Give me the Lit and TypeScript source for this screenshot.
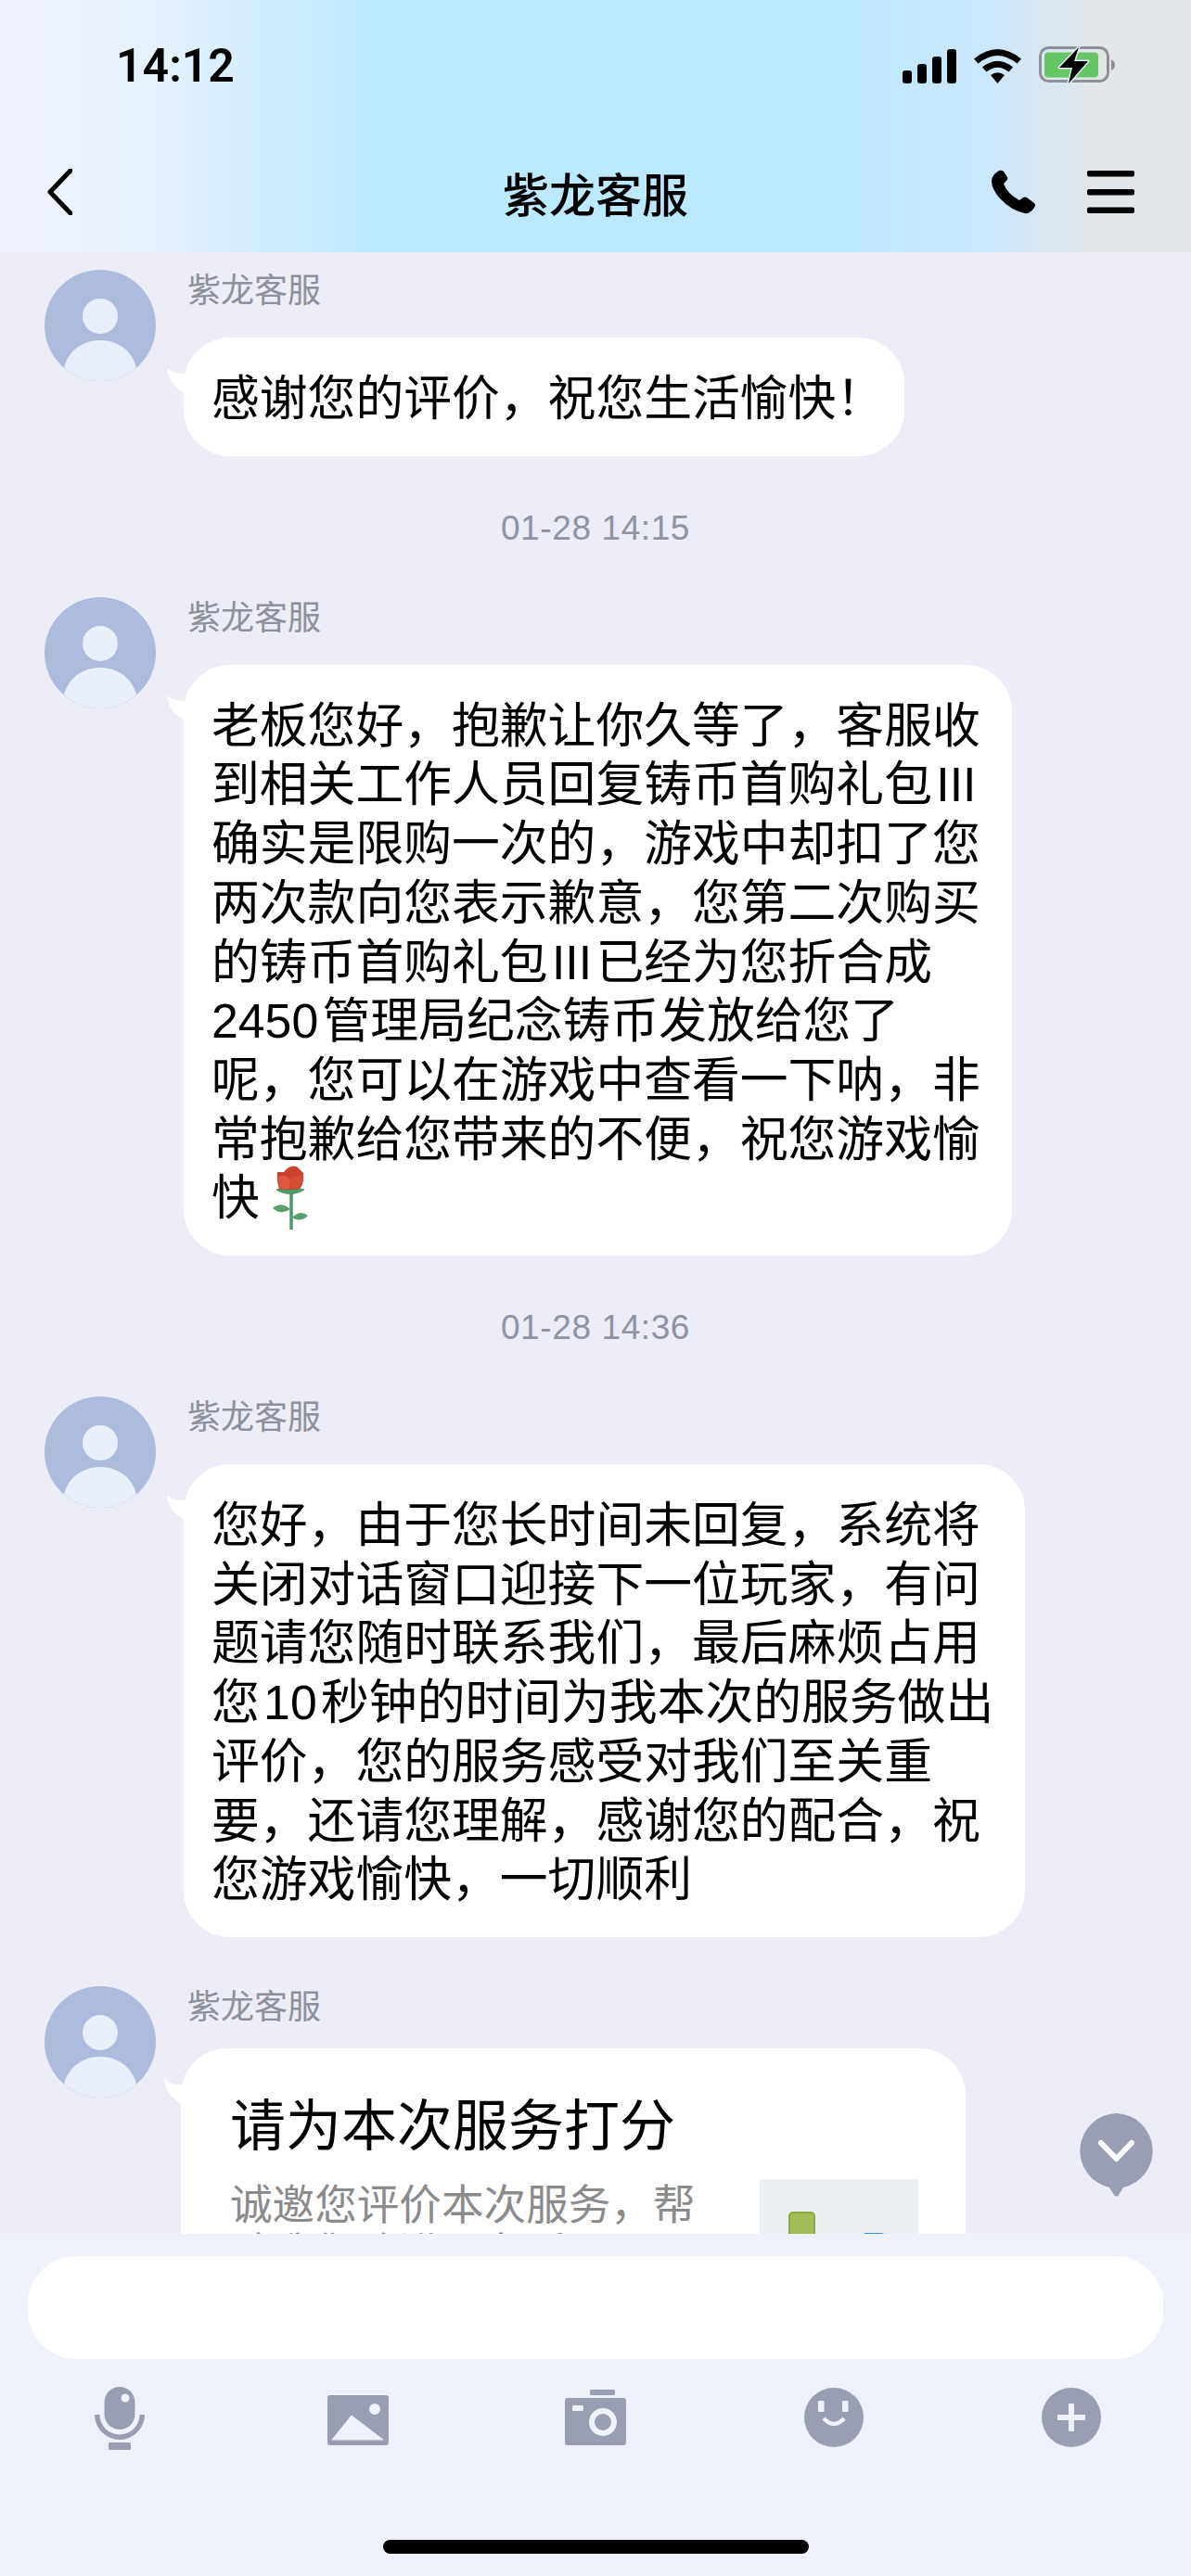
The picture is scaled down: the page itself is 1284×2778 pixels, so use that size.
import { LitElement, html, css, svg } from 'lit';
import { customElement } from 'lit/decorators.js';

const rose = html`<svg class="rose" viewBox="0 0 38 69">
  <path d="M20 28 L20 68" stroke="#4f9768" stroke-width="3.5" stroke-linecap="round" fill="none" />
  <path d="M5 26 Q20 34 33 26 Q20 23 5 26Z" fill="#4f9768" stroke="#4f9768" stroke-width="2" stroke-linejoin="round" />
  <path d="M19 47 Q9 38 0 46 Q9 54 19 47Z" fill="#5b9f70" />
  <path d="M21 56 Q30 47 38 54 Q30 62 21 56Z" fill="#5b9f70" />
  <path d="M5 7 L12 7 Q18 -1 26 1 L33 8 Q34 20 29 25 Q18 27 7 25 Q4 16 5 7Z" fill="#c8432f" />
  <path d="M6 12 Q15 9 19 16 L18 25 Q12 26 8 24Z" fill="#e2583f" />
  <path d="M19 16 Q24 9 32 11 Q32 20 28 24 L20 25Z" fill="#d64e37" />
</svg>`;

const messages = [
  { time: '', lines: [html`感谢您的评价，祝您生活愉快<span class="bang">！</span>`] },
  {
    time: '01-28 14:15',
    lines: [
      '老板您好，抱歉让你久等了，客服收',
      '到相关工作人员回复铸币首购礼包\u200aIII',
      '确实是限购一次的，游戏中却扣了您',
      '两次款向您表示歉意，您第二次购买',
      '的铸币首购礼包\u200aIII\u200a已经为您折合成',
      '2450\u200a管理局纪念铸币发放给您了',
      '呢，您可以在游戏中查看一下呐，非',
      '常抱歉给您带来的不便，祝您游戏愉',
      html`快${rose}`,
    ],
  },
  {
    time: '01-28 14:36',
    lines: [
      '您好，由于您长时间未回复，系统将',
      '关闭对话窗口迎接下一位玩家，有问',
      '题请您随时联系我们，最后麻烦占用',
      '您\u200a10\u200a秒钟的时间为我本次的服务做出',
      '评价，您的服务感受对我们至关重',
      '要，还请您理解，感谢您的配合，祝',
      '您游戏愉快，一切顺利',
    ],
  },
];

@customElement('app-root')
export class AppRoot extends LitElement {
  static styles = css`
    :host {
      display: flex;
      flex-direction: column;
      height: 2778px;
      overflow: hidden;
      position: relative;
      background: #ecedf6;
      font-family: 'Liberation Sans', 'Noto Sans CJK SC', sans-serif;
      color: #000;
    }
    .header {
      height: 272px;
      flex: none;
      box-sizing: border-box;
      background: linear-gradient(90deg, #f1f3ff 0%, #e6f1ff 14%, #bde9ff 30%, #b9e9ff 70%, #cce7fb 83%, #e0e6ea 91%, #e4e7ea 100%);
    }
    .status {
      height: 40px;
      padding: 51px 82px 0 125px;
      display: flex;
      align-items: center;
      justify-content: space-between;
    }
    .clock {
      font: 600 50px/40px Roboto, sans-serif;
    }
    .status-icons {
      display: flex;
      align-items: center;
      gap: 19px;
    }
    .nav {
      margin-top: 88px;
      padding: 0 61px 0 51px;
      height: 56px;
      display: flex;
      align-items: center;
      justify-content: space-between;
      position: relative;
    }
    .title {
      position: absolute;
      left: 0;
      right: 0;
      text-align: center;
      font-size: 50px;
      font-weight: 500;
      line-height: 56px;
      font-family: 'Noto Sans CJK SC', sans-serif;
    }
    .nav-actions {
      display: flex;
      align-items: center;
      gap: 55px;
    }
    svg {
      display: block;
      flex: none;
    }
    .chat {
      flex: 1;
      min-height: 0;
      overflow: hidden;
      padding: 19px 0 0 48px;
    }
    .stamp {
      margin: 56px 0 52px -48px;
      text-align: center;
      font-size: 37px;
      letter-spacing: 0.6px;
      line-height: 44px;
      color: #8f93a3;
    }
    .msg {
      display: flex;
      gap: 30px;
      margin-bottom: 53px;
    }
    .msg.last {
      margin-bottom: 0;
    }
    .avatar {
      width: 120px;
      height: 120px;
    }
    .body {
      display: flex;
      flex-direction: column;
      align-items: flex-start;
    }
    .name {
      margin: 1px 0 0 4px;
      font-size: 36px;
      line-height: 44px;
      color: #8e909c;
    }
    .bubble {
      position: relative;
      margin-top: 28px;
      padding: 35px 34px 29px 30px;
      background: #fff;
      border-radius: 50px;
      font-size: 51.8px;
      line-height: 63.7px;
      white-space: nowrap;
    }
    .bang {
      margin-right: -12px;
    }
    .tail {
      position: absolute;
      left: -18px;
      top: 33px;
    }
    .rose {
      display: inline-block;
      width: 38px;
      height: 69px;
      margin: -10px 0 -16px 14px;
    }
    .card {
      width: 846px;
      height: 400px;
      margin: 22px 0 0 -3px;
      padding: 45px 51px 0 53px;
      box-sizing: border-box;
      white-space: normal;
    }
    .card-title {
      font-size: 60px;
      line-height: 80px;
    }
    .card-row {
      display: flex;
      justify-content: space-between;
      margin-top: 16px;
    }
    .card-text {
      width: 510px;
      padding-top: 3px;
      font-size: 45.6px;
      line-height: 52px;
      color: #8b8b8b;
    }
    .thumb {
      width: 171px;
      height: 200px;
      background: #ebf0f4;
      position: relative;
    }
    .thumb i {
      position: absolute;
      display: block;
      box-sizing: border-box;
      border-radius: 5px 5px 0 0;
    }
    .thumb .green {
      left: 31px;
      top: 35px;
      width: 29px;
      height: 80px;
      background: #a5bb57;
      border: 2px solid #8caa42;
    }
    .thumb .blue {
      left: 110px;
      top: 58px;
      width: 26px;
      height: 60px;
      background: #3a8fd8;
    }
    .scroll-down {
      position: absolute;
      left: 1163px;
      top: 2279px;
    }
    .footer {
      flex: none;
      height: 369px;
      box-sizing: border-box;
      padding: 24px 30px 0;
      position: relative;
      background: #f0f2fb;
    }
    .input {
      height: 111px;
      background: #fff;
      border-radius: 52px;
    }
    .tools {
      margin: 30px -30px 0;
      display: grid;
      grid-template-columns: repeat(5, 256.5px);
      justify-content: center;
    }
    .tool {
      display: flex;
      justify-content: center;
    }
    .tool.image {
      padding-top: 9px;
    }
    .tool.camera {
      padding-top: 3px;
    }
    .tool.round {
      padding-top: 1px;
    }
    .home-bar {
      position: absolute;
      left: 413px;
      top: 330px;
      width: 459px;
      height: 15px;
      border-radius: 8px;
      background: #000;
    }
  `;

  avatar() {
    return html`<svg class="avatar" viewBox="0 0 120 120">
      <circle cx="60" cy="60" r="60" fill="#adbcdc" />
      <circle cx="60" cy="50" r="19" fill="#e9f0fb" />
      <path d="M21 105.500 C30 66 90 66 99 105.500 A60 60 0 0 1 21 105.500Z" fill="#e9f0fb" />
    </svg>`;
  }

  tail() {
    return svg`<svg class="tail" width="22" height="32" viewBox="0 0 22 32">
      <path d="M0 0 Q8 7 20 6 L22 28 Q2 20 0 0Z" fill="#fff" />
    </svg>`;
  }

  renderMessage(m: (typeof messages)[number]) {
    return html`
      ${m.time ? html`<div class="stamp">${m.time}</div>` : ''}
      <div class="msg">
        ${this.avatar()}
        <div class="body">
          <div class="name">紫龙客服</div>
          <div class="bubble">
            ${this.tail()}
            ${m.lines.map((l, i) => html`${i ? html`<br />` : ''}${l}`)}
          </div>
        </div>
      </div>
    `;
  }

  render() {
    return html`
      <div class="header">
        <div class="status">
          <div class="clock">14:12</div>
          <div class="status-icons">
            <svg width="58" height="37" viewBox="0 0 58 37" fill="#000">
              <rect x="0" y="23" width="10" height="14" rx="3" />
              <rect x="16" y="16" width="10" height="21" rx="3" />
              <rect x="32" y="8" width="10" height="29" rx="3" />
              <rect x="48" y="0" width="10" height="37" rx="3" />
            </svg>
            <svg width="51" height="37" viewBox="0 0 51 37" fill="#000">
              <path d="M0 10.500 Q25.500 -10.500 51 10.500 L46.500 15.500 Q25.500 -1.500 4.500 15.500Z" />
              <path d="M9 19.500 Q25.500 6 42 19.500 L37.500 24.500 Q25.500 15 13.500 24.500Z" />
              <path d="M18 28 Q25.500 22.500 33 28 L25.500 37Z" />
            </svg>
            <svg width="82" height="42" viewBox="0 0 82 42">
              <rect x="1.500" y="1.500" width="73" height="36" rx="9" fill="none" stroke="#8b9196" stroke-width="3" />
              <path d="M78 14 Q82 16 82 20 Q82 24 78 26Z" fill="#8b9196" />
              <rect x="6" y="6.500" width="58" height="27" rx="4" fill="#66c666" />
              <path d="M43 1 L22 23 L36 23 L32 40 L53 16 L38 16Z" fill="#000" stroke="#e0edf3" stroke-width="3" stroke-linejoin="round" paint-order="stroke" />
            </svg>
          </div>
        </div>
        <div class="nav">
          <svg width="27" height="50" viewBox="0 0 27 50">
            <path d="M25 2 L3 25 L25 48" fill="none" stroke="#000" stroke-width="5" stroke-linecap="round" stroke-linejoin="round" />
          </svg>
          <div class="title">紫龙客服</div>
          <div class="nav-actions">
            <svg width="48" height="48" viewBox="0 0 48 48">
              <path d="M8 1 Q11 0 13 2 L17 8 Q18 10 16 12 L13 15 Q17 26 30 33 L34 30 Q36 29 38 30 L46 36 Q48 38 46 41 Q41 48 36 47 Q21 44 9 31 Q0 21 0 12 Q0 6 8 1Z" fill="#000" />
            </svg>
            <svg width="51" height="46" viewBox="0 0 51 46" fill="#000">
              <rect y="0" width="51" height="6.500" rx="2" />
              <rect y="20" width="51" height="6.500" rx="2" />
              <rect y="39.500" width="51" height="6.500" rx="2" />
            </svg>
          </div>
        </div>
      </div>

      <div class="chat">
        ${messages.map((m) => this.renderMessage(m))}
        <div class="msg last">
          ${this.avatar()}
          <div class="body">
            <div class="name">紫龙客服</div>
            <div class="bubble card">
              ${this.tail()}
              <div class="card-title">请为本次服务打分</div>
              <div class="card-row">
                <div class="card-text">诚邀您评价本次服务，帮助我们改进服务质量</div>
                <div class="thumb"><i class="green"></i><i class="blue"></i></div>
              </div>
            </div>
          </div>
        </div>
      </div>

      <svg class="scroll-down" width="81" height="90" viewBox="0 0 81 90">
        <path d="M40.500 0 A40.500 40.500 0 0 1 48 80 L43 88 Q40.500 91 38 88 L33 80 A40.500 40.500 0 0 1 40.500 0Z" fill="#9a9eb2" />
        <path d="M24 32 L40.500 49 L57 32" fill="none" stroke="#fff" stroke-width="6" stroke-linecap="round" stroke-linejoin="round" />
      </svg>

      <div class="footer">
        <div class="input"></div>
        <div class="tools">
          <div class="tool">
            <svg width="54" height="68" viewBox="0 0 54 68" fill="#9a9eb2">
              <rect x="10.500" y="0" width="33" height="46" rx="16.500" />
              <circle cx="33" cy="12" r="4.500" fill="#eff2fb" />
              <path d="M0 30 H5.500 A21.500 21.500 0 0 0 48.500 30 H54 A27 27 0 0 1 0 30Z" />
              <rect x="15" y="60" width="24" height="8" rx="1.500" />
            </svg>
          </div>
          <div class="tool image">
            <svg width="66" height="54" viewBox="0 0 66 54">
              <rect width="66" height="54" rx="3" fill="#9a9eb2" />
              <path d="M5 48 L26 22 L60 48Z" fill="#eff2fb" stroke="#eff2fb" stroke-width="1" stroke-linejoin="round" />
              <circle cx="51" cy="15" r="6" fill="#eff2fb" />
            </svg>
          </div>
          <div class="tool camera">
            <svg width="66" height="60" viewBox="0 0 66 60" fill="#9a9eb2">
              <rect x="27" y="0" width="27" height="6" rx="1.500" />
              <rect x="0" y="9" width="66" height="51" rx="3" />
              <rect x="8" y="17" width="12" height="6" rx="1.500" fill="#eff2fb" />
              <circle cx="41" cy="35" r="12" fill="none" stroke="#eff2fb" stroke-width="6" />
            </svg>
          </div>
          <div class="tool round">
            <svg width="64" height="64" viewBox="0 0 64 64">
              <circle cx="32" cy="32" r="32" fill="#9a9eb2" />
              <rect x="15" y="14" width="6.500" height="12" rx="1" fill="#eff2fb" />
              <rect x="41" y="14" width="6.500" height="12" rx="1" fill="#eff2fb" />
              <path d="M21 33 Q32 45 43 33" fill="none" stroke="#eff2fb" stroke-width="4.500" />
            </svg>
          </div>
          <div class="tool round">
            <svg width="64" height="64" viewBox="0 0 64 64">
              <circle cx="32" cy="32" r="32" fill="#9a9eb2" />
              <rect x="29" y="17" width="6" height="30" rx="1" fill="#eff2fb" />
              <rect x="17" y="29" width="30" height="6" rx="1" fill="#eff2fb" />
            </svg>
          </div>
        </div>
        <div class="home-bar"></div>
      </div>
    `;
  }
}
